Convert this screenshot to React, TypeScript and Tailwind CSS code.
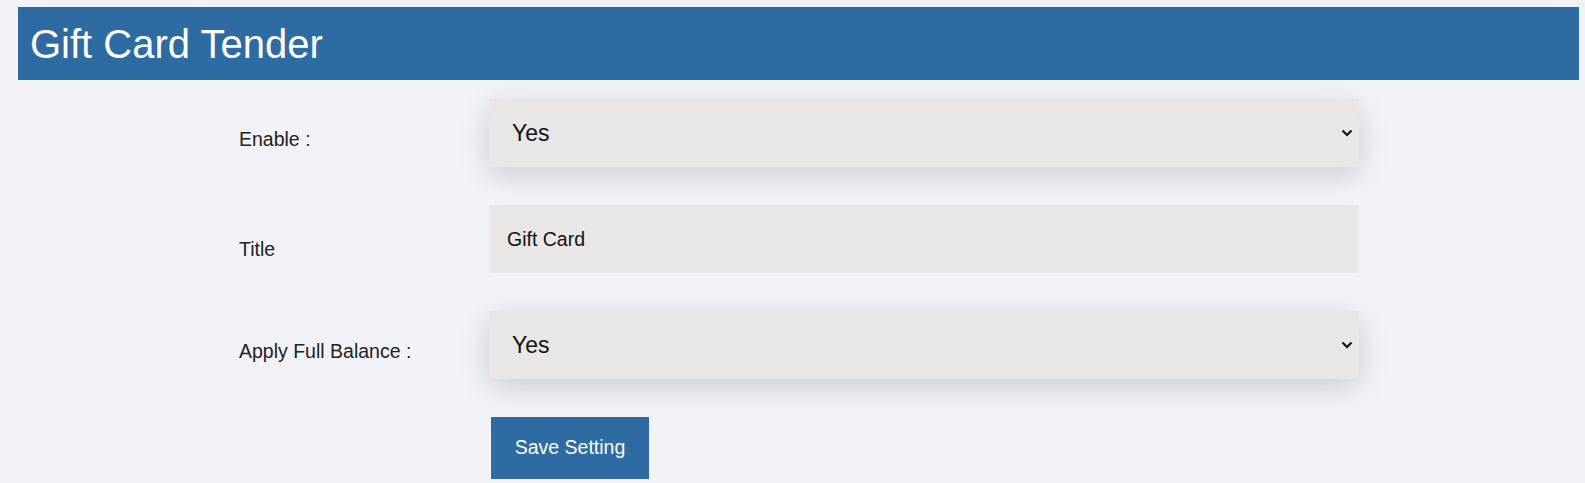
import { useState } from 'react';

function Chevron() {
  return (
    <svg
      width="12"
      height="8"
      viewBox="0 0 12 8"
      className="pointer-events-none absolute right-[6px] top-1/2 -translate-y-1/2"
      aria-hidden="true"
    >
      <path d="M1.5 1.5 L6 6 L10.5 1.5" fill="none" stroke="#111" strokeWidth="2.2" />
    </svg>
  );
}

export default function App() {
  const [enable, setEnable] = useState('1');
  const [title, setTitle] = useState('Gift Card');
  const [fullBalance, setFullBalance] = useState('1');

  return (
    <div className="min-h-screen bg-[#f2f3f8] pt-[7px] font-['Liberation_Sans',Arial,sans-serif] text-[#222]">
      {/* Header */}
      <div className="ml-[18px] mr-[6px] flex h-[73px] items-center bg-[#2d6ba2] pl-[12px]">
        <h1 className="text-[40px] leading-none font-normal text-white">Gift Card Tender</h1>
      </div>

      {/* Form */}
      <form className="flex flex-col gap-[38px] pt-[19px] pl-[239px]" onSubmit={(e) => e.preventDefault()}>
        <div className="flex items-start">
          <label className="w-[250px] shrink-0 pt-[26px] text-[19.5px]">Enable :</label>
          <div className="relative w-[870px]">
            <select
              value={enable}
              onChange={(e) => setEnable(e.target.value)}
              className="h-[68px] w-full appearance-none bg-[#e8e7e5] pl-[23px] text-[23px] text-[#111] shadow-[0_8px_30px_rgba(0,0,0,0.16)] outline-none"
            >
              <option value="1">Yes</option>
              <option value="0">No</option>
            </select>
            <Chevron />
          </div>
        </div>

        <div className="flex items-start">
          <label className="w-[250px] shrink-0 pt-[30px] text-[19.5px]">Title</label>
          <input
            value={title}
            onChange={(e) => setTitle(e.target.value)}
            className="h-[68px] w-[870px] bg-[#e8e7e5] pl-[18px] text-[19.5px] text-[#111] outline-none"
          />
        </div>

        <div className="flex items-start">
          <label className="w-[250px] shrink-0 pt-[26px] text-[19.5px]">Apply Full Balance :</label>
          <div className="relative w-[870px]">
            <select
              value={fullBalance}
              onChange={(e) => setFullBalance(e.target.value)}
              className="h-[68px] w-full appearance-none bg-[#e8e7e5] pl-[23px] text-[23px] text-[#111] shadow-[0_8px_30px_rgba(0,0,0,0.16)] outline-none"
            >
              <option value="1">Yes</option>
              <option value="0">No</option>
            </select>
            <Chevron />
          </div>
        </div>

        <div className="flex">
          <div className="w-[252px] shrink-0" />
          <button
            type="submit"
            className="h-[62px] w-[158px] bg-[#2d6ba2] text-[19.5px] text-white"
          >
            Save Setting
          </button>
        </div>
      </form>
    </div>
  );
}
